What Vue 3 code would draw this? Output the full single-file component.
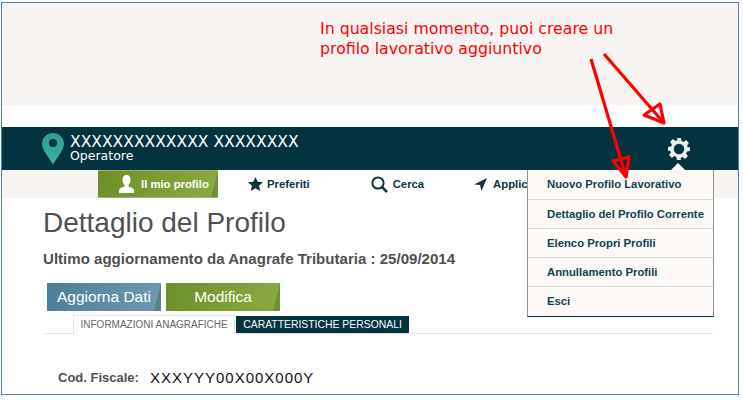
<template>
  <div class="shot">
    <div class="frame">
      <div class="top-band"></div>
      <div class="top-gap"></div>

      <header class="head">
        <svg class="pin" width="22" height="32" viewBox="0 0 22 32">
          <defs>
            <linearGradient id="pinFill" x1="0" y1="0" x2="0" y2="1">
              <stop offset="0" stop-color="#2f9c90" />
              <stop offset="1" stop-color="#38b5a0" />
            </linearGradient>
          </defs>
          <path d="M11 0C4.900 0 0 4.800 0 10.800 0 17 7.500 25.500 11 31.500 14.500 25.500 22 17 22 10.800 22 4.800 17.100 0 11 0Z M11 6a4 4 0 1 1 0 8 4 4 0 0 1 0-8Z" fill="url(#pinFill)" fill-rule="evenodd" />
        </svg>
        <div class="who">
          <div class="who-name">XXXXXXXXXXXXX XXXXXXXX</div>
          <div class="who-role">Operatore</div>
        </div>
        <svg class="gear" width="24" height="24" viewBox="0 0 24 24">
          <path d="M10 1h4l.6 3.100 1.900.8 2.600-1.800 2.800 2.800-1.800 2.600.8 1.900L23 10v4l-3.100.6-.8 1.900 1.800 2.600-2.800 2.800-2.600-1.800-1.900.8L13.900 23h-4l-.6-3.100-1.900-.8-2.600 1.800-2.800-2.800 1.800-2.600-.8-1.900L1 14v-4l3.100-.6.800-1.900-1.800-2.600 2.800-2.800 2.600 1.800 1.900-.8Z M12 6.800a5.200 5.200 0 1 0 0 10.400 5.200 5.200 0 0 0 0-10.400Z" fill="#ececec" fill-rule="evenodd" />
        </svg>
      </header>

      <nav class="nav">
        <div class="nav-side"></div>
        <div class="nav-item nav-active slant">
          <svg width="15" height="18" viewBox="0 0 15 18"><path d="M7.500 0C10 0 11.500 2 11.500 4.800 11.500 7 10.600 8.800 9.500 10v1.500c2.500.8 5.500 1.800 5.500 4.500v2H0v-2c0-2.700 3-3.700 5.500-4.500V10C4.400 8.800 3.500 7 3.500 4.800 3.500 2 5 0 7.500 0Z" fill="#fff" /></svg>
          <span>Il mio profilo</span>
        </div>
        <div class="nav-item nav-fav">
          <svg width="15" height="14" viewBox="0 0 15 14"><path d="M7.500 0l2.200 4.700 5.300.6-3.900 3.500 1.100 5.200-4.700-2.700L2.800 14l1.100-5.200L0 5.300l5.300-.6Z" fill="#0d3440" /></svg>
          <span>Preferiti</span>
        </div>
        <div class="nav-item nav-search">
          <svg width="17" height="17" viewBox="0 0 17 17"><circle cx="7" cy="7" r="5.600" fill="none" stroke="#0d3440" stroke-width="2" /><path d="M10.800 10.800L16 16" stroke="#0d3440" stroke-width="2.600" /></svg>
          <span>Cerca</span>
        </div>
        <div class="nav-item nav-app">
          <svg width="13" height="13" viewBox="0 0 13 13"><path d="M13 0L7.500 13 6 7 0 6.500Z" fill="#0d3440" /></svg>
          <span>Applic</span>
        </div>
        <div class="nav-end"></div>
      </nav>

      <main class="page">
        <h1>Dettaglio del Profilo</h1>
        <p class="updated">Ultimo aggiornamento da Anagrafe Tributaria : 25/09/2014</p>
        <div class="actions">
          <button class="btn btn-blue slant">Aggiorna Dati</button>
          <button class="btn btn-green slant">Modifica</button>
        </div>
        <div class="tabs">
          <div class="tab tab-on">INFORMAZIONI ANAGRAFICHE</div>
          <div class="tab tab-off">CARATTERISTICHE PERSONALI</div>
        </div>
        <div class="field">
          <span class="field-label">Cod. Fiscale:</span>
          <span class="field-value">XXXYYY00X00X000Y</span>
        </div>
      </main>

      <div class="menu">
        <div v-for="item in menuItems" :key="item" class="menu-row">{{ item }}</div>
      </div>
      <div class="menu-tip"></div>

      <div class="note">In qualsiasi momento, puoi creare un<br />profilo lavorativo aggiuntivo</div>
      <svg class="arrows" width="743" height="400" viewBox="0 0 743 400">
        <g fill="none" stroke="#f00" stroke-width="3.200" stroke-linejoin="round">
          <path d="M604 54L664 123" />
          <path d="M660 104L644 115 664 123Z" />
          <path d="M591 59L626 177" />
          <path d="M613 161L629 157 626 177Z" />
        </g>
      </svg>
    </div>
  </div>
</template>

<script setup>
const menuItems = [
  'Nuovo Profilo Lavorativo',
  'Dettaglio del Profilo Corrente',
  'Elenco Propri Profili',
  'Annullamento Profili',
  'Esci',
]
</script>

<style>
html, body { margin: 0; background: #fff; }
</style>

<style scoped>
.shot { width: 743px; height: 400px; overflow: hidden; background: #fff; padding: 2px 0 0 1px; box-sizing: border-box; font-family: "Liberation Sans", Arial, sans-serif; }
.frame { position: relative; width: 738px; height: 393px; box-sizing: border-box; border: 1px solid #4f81bd; overflow: hidden; background: #fff; }
.top-band { height: 102px; background: #f8f4f2; }
.top-gap { height: 22px; }
.head { height: 43px; background: #02333f; display: flex; align-items: center; padding-left: 40px; }
.pin { margin-right: 6px; }
.who { color: #fff; font-family: "DejaVu Sans", sans-serif; }
.who-name { font-size: 15.55px; line-height: 15px; margin-top: -1px; }
.who-role { font-size: 12.5px; line-height: 13px; margin-top: -1px; }
.gear { margin-left: auto; margin-right: 47px; }
.nav { height: 28px; display: flex; background: #fff; font-weight: bold; font-size: 11.3px; color: #0d3440; }
.nav-side { width: 96px; background: #f8f4f2; }
.nav-item { display: flex; align-items: center; gap: 6px; }
.nav-active { position: relative; width: 120px; box-sizing: border-box; padding-left: 21px; gap: 7px; color: #fff; background: linear-gradient(100deg, #6d8f28 0%, #8aab44 100%); border-top: 1px solid #9bb860; border-bottom: 1px solid #9bb860; }
.nav-fav { margin-left: 30px; gap: 4px; }
.nav-search { margin-left: 61px; gap: 5px; }
.nav-app { margin-left: 50px; }
.nav-end { margin-left: auto; width: 100px; background: #f8f4f2; }
.slant::after { content: ""; position: absolute; right: 0; bottom: 0; width: 7px; height: 100%; background: rgba(60, 80, 30, 0.3); clip-path: polygon(100% 0, 100% 100%, 0 100%); }
.page { padding: 9px 0 0 41px; color: #505050; }
h1 { margin: 0; font-size: 28px; line-height: 31px; font-weight: normal; }
.updated { margin: 13px 0 0; font-size: 15.07px; font-weight: bold; line-height: 16px; }
.actions { display: flex; gap: 5px; margin: 16px 0 0 4px; }
.btn { position: relative; width: 114px; height: 28px; border: 0; padding: 0; color: #fff; font: 15.5px "Liberation Sans", Arial, sans-serif; }
.btn-blue { background: linear-gradient(100deg, #4d7d99, #6d9ab2); }
.btn-green { background: linear-gradient(100deg, #6d8f28, #8aab44); }
.tabs { display: flex; gap: 1px; height: 18px; padding-left: 30px; margin-top: 4px; border-bottom: 1px solid #e4e4e4; width: 640px; }
.tab { font-size: 10px; line-height: 17px; padding: 0 7px; }
.tab-on { border: 1px solid #e4e4e4; border-bottom: 0; background: #fff; color: #666; padding: 0 6.5px; line-height: 18px; margin-bottom: -1px; }
.tab-off { background: #02333f; color: #fff; font-size: 10.4px; margin-top: 1px; }
.field { display: flex; align-items: center; gap: 11px; margin: 35px 0 0 15px; }
.field-label { font-size: 13px; font-weight: bold; }
.field-value { font-size: 15px; color: #111; letter-spacing: 1px; }
.menu { position: absolute; left: 525px; top: 167px; width: 187px; box-sizing: border-box; background: #fdf9f7; border: 1px solid #8a9598; border-top: 0; border-bottom: 1px solid #02333f; padding-bottom: 1px; }
.menu-row { height: 29px; line-height: 29px; padding-left: 19px; font-size: 11.3px; font-weight: bold; color: #0d4450; border-top: 1px solid #dcd8d6; box-sizing: border-box; }
.menu-row:first-child { border-top: 0; }
.menu-tip { position: absolute; left: 669px; top: 160px; width: 0; height: 0; border: 7px solid transparent; border-top: 0; border-bottom-color: #fff; }
.note { position: absolute; left: 318px; top: 16px; color: #f00; font-family: "DejaVu Sans", sans-serif; font-size: 15.75px; line-height: 20px; }
.arrows { position: absolute; left: -2px; top: -3px; pointer-events: none; }
</style>
